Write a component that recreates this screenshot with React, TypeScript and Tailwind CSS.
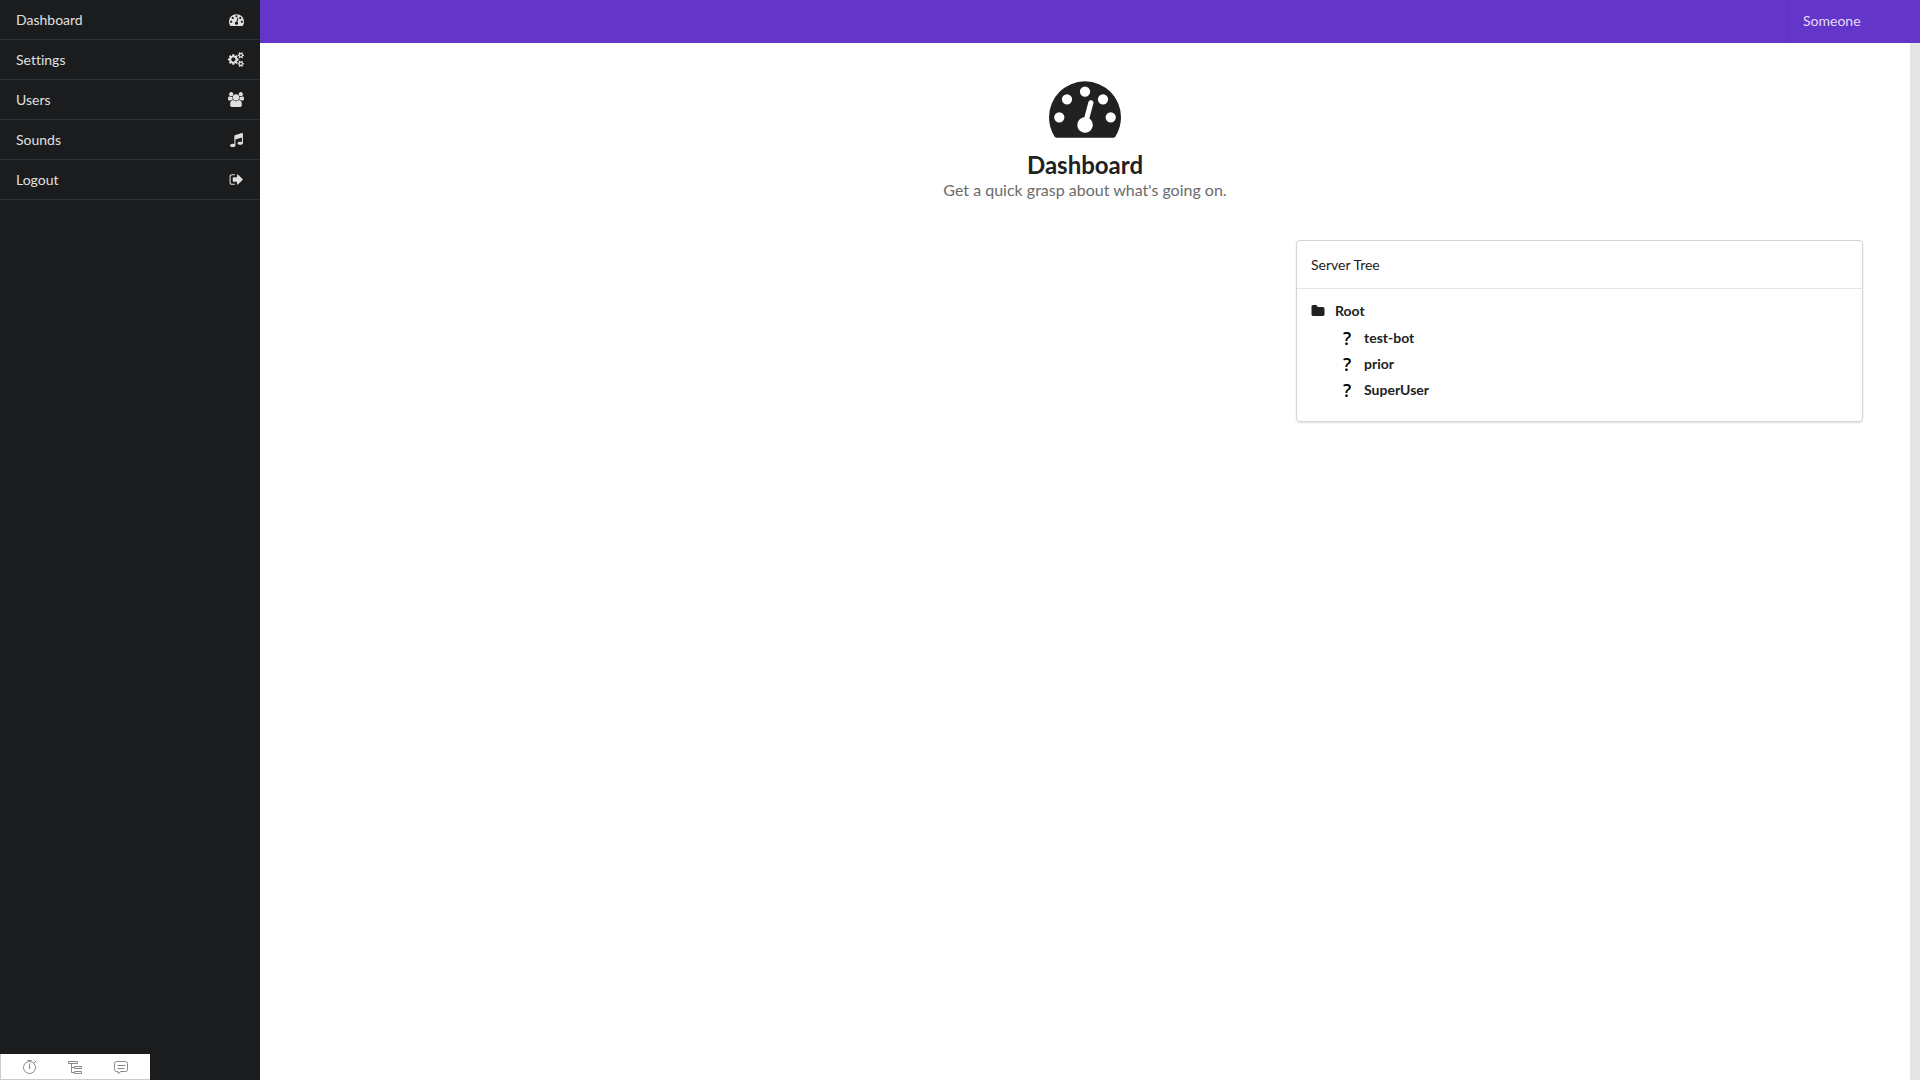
import React from "react";

type IconProps = { className?: string };

const smallGear =
  "v140q0 16-149 31-12 27-30 52 51 113 51 138 0 4-4 7-122 71-124 71-8 0-46-47t-52-68q-20 2-30 2t-30-2q-14 21-52 68t-46 47q-2 0-124-71-4-3-4-7 0-25 51-138-18-25-30-52-149-15-149-31v-140q0-16 149-31 13-29 30-52-51-113-51-138 0-4 4-7 4-2 35-20t59-34 30-16q8 0 46 46.5t52 67.5q20-2 30-2t30 2q51-71 92-112l6-2q4 0 124 70 4 3 4 7 0 25-51 138 17 23 30 52 149 15 149 31z";

function GaugeIcon({ className }: IconProps) {
  return (
    <svg viewBox="0 0 1792 1792" className={className} fill="currentColor" aria-hidden="true">
      <path d="M384 1152q0-53-37.5-90.5t-90.5-37.5-90.5 37.5-37.5 90.5 37.5 90.5 90.5 37.5 90.5-37.5 37.5-90.5zm192-448q0-53-37.5-90.5t-90.5-37.5-90.5 37.5-37.5 90.5 37.5 90.5 90.5 37.5 90.5-37.5 37.5-90.5zm428 481l101-382q6-26-7.5-48.5t-38.5-29.5-48 6.5-30 39.5l-101 382q-60 5-107 43.5t-63 98.5q-20 77 20 146t117 89 146-20 89-117q16-60-6-117t-72-91zm660-33q0-53-37.5-90.5t-90.5-37.5-90.5 37.5-37.5 90.5 37.5 90.5 90.5 37.5 90.5-37.5 37.5-90.5zm-640-640q0-53-37.5-90.5t-90.5-37.5-90.5 37.5-37.5 90.5 37.5 90.5 90.5 37.5 90.5-37.5 37.5-90.5zm448 192q0-53-37.5-90.5t-90.5-37.5-90.5 37.5-37.5 90.5 37.5 90.5 90.5 37.5 90.5-37.5 37.5-90.5zm320 448q0 261-141 483-19 29-54 29h-1402q-35 0-54-29-141-221-141-483 0-182 71-348t191-286 286-191 348-71 348 71 286 191 191 286 71 348z" />
    </svg>
  );
}

function GearsIcon({ className }: IconProps) {
  return (
    <svg viewBox="0 0 1920 1792" className={className} fill="currentColor" aria-hidden="true">
      <path
        fillRule="evenodd"
        d="M896 896q0-106-75-181t-181-75-181 75-75 181 75 181 181 75 181-75 75-181zM1280 805v185q0 10-7 19.5t-16 10.5l-155 24q-11 35-32 76 34 48 90 115 7 11 7 20 0 12-7 19-23 30-82.5 89.5t-78.5 59.5q-11 0-21-7l-115-90q-37 19-77 31-11 108-23 155-7 24-30 24h-186q-11 0-20-7.5t-10-17.5l-23-153q-34-10-75-31l-118 89q-7 7-20 7-11 0-21-8-144-133-144-160 0-9 7-19 10-14 41-53t47-61q-23-44-35-82l-152-24q-10-1-17-9.5t-7-19.5v-185q0-10 7-19.5t16-10.5l155-24q11-35 32-76-34-48-90-115-7-11-7-20 0-12 7-20 22-30 82-89t79-59q11 0 21 7l115 90q34-18 77-32 11-108 23-154 7-24 30-24h186q11 0 20 7.5t10 17.5l23 153q34 10 75 31l118-89q8-7 20-7 11 0 21 8 144 133 144 160 0 8-7 19-12 16-42 54t-45 60q23 48 34 82l152 23q10 2 17 10.5t7 19.5z"
      />
      <path fillRule="evenodd" d={"M1920 1338" + smallGear + "M1664 1408q0-52-38-90t-90-38-90 38-38 90q0 53 37.5 90.5t90.5 37.5 90.5-37.5 37.5-90.5z"} />
      <path fillRule="evenodd" d={"M1920 314" + smallGear + "M1664 384q0-52-38-90t-90-38-90 38-38 90q0 53 37.5 90.5t90.5 37.5 90.5-37.5 37.5-90.5z"} />
    </svg>
  );
}

function UsersIcon({ className }: IconProps) {
  return (
    <svg viewBox="0 0 1920 1792" className={className} fill="currentColor" aria-hidden="true">
      <path d="M593 896q-162 5-265 128h-134q-82 0-138-40.5t-56-118.5q0-353 124-353 6 0 43.5 21t97.5 42.5 119 21.5q67 0 133-23-5 37-5 66 0 139 81 256zm1071 637q0 120-73 189.5t-194 69.5h-874q-121 0-194-69.5t-73-189.5q0-53 3.5-103.5t14-109 26.5-108.5 43-97.5 62-81 85.5-53.5 111.5-20q10 0 43 21.5t73 48 107 48 135 21.5 135-21.5 107-48 73-48 43-21.5q61 0 111.5 20t85.5 53.5 62 81 43 97.5 26.5 108.5 14 109 3.5 103.5zm-1024-1277q0 106-75 181t-181 75-181-75-75-181 75-181 181-75 181 75 75 181zm704 384q0 159-112.5 271.5t-271.5 112.5-271.5-112.5-112.5-271.5 112.5-271.5 271.5-112.5 271.5 112.5 112.5 271.5zm576 225q0 78-56 118.5t-138 40.5h-134q-103-123-265-128 81-117 81-256 0-29-5-66 66 23 133 23 59 0 119-21.5t97.5-42.5 43.5-21q124 0 124 353zm-128-609q0 106-75 181t-181 75-181-75-75-181 75-181 181-75 181 75 75 181z" />
    </svg>
  );
}

function MusicIcon({ className }: IconProps) {
  return (
    <svg viewBox="0 0 1792 1792" className={className} fill="currentColor" aria-hidden="true">
      <path d="M1664 224v1120q0 50-34 89t-86 60.5-103.5 32-96.5 10.5-96.5-10.5-103.5-32-86-60.5-34-89 34-89 86-60.5 103.5-32 96.5-10.5q105 0 192 39v-537l-768 237v709q0 50-34 89t-86 60.5-103.5 32-96.5 10.5-96.5-10.5-103.5-32-86-60.5-34-89 34-89 86-60.5 103.5-32 96.5-10.5q105 0 192 39v-967q0-31 19-56.5t49-35.5l832-256q12-4 28-4 40 0 68 28t28 68z" />
    </svg>
  );
}

function SignOutIcon({ className }: IconProps) {
  return (
    <svg viewBox="0 0 1792 1792" className={className} fill="currentColor" aria-hidden="true">
      <path d="M704 1440q0 4 1 20t.5 26.5-3 23.5-10 19.5-20.5 6.5h-320q-119 0-203.5-84.5t-84.5-203.5v-704q0-119 84.5-203.5t203.5-84.5h320q13 0 22.5 9.5t9.5 22.5q0 4 1 20t.5 26.5-3 23.5-10 19.5-20.5 6.5h-320q-66 0-113 47t-47 113v704q0 66 47 113t113 47h312l11.5 1 11.5 3 8 5.5 7 9 2 13.5zm928-544q0 26-19 45l-544 544q-19 19-45 19t-45-19-19-45v-288h-448q-26 0-45-19t-19-45v-384q0-26 19-45t45-19h448v-288q0-26 19-45t45-19 45 19l544 544q19 19 19 45z" />
    </svg>
  );
}

function FolderIcon({ className }: IconProps) {
  return (
    <svg viewBox="0 0 1792 1792" className={className} fill="currentColor" aria-hidden="true">
      <path d="M1728 608v704q0 92-66 158t-158 66h-1216q-92 0-158-66t-66-158v-960q0-92 66-158t158-66h320q92 0 158 66t66 158v32h672q92 0 158 66t66 158z" />
    </svg>
  );
}

function StopwatchIcon() {
  return (
    <svg viewBox="0 0 16 16" className="size-4" fill="none" stroke="currentColor" aria-hidden="true">
      <circle cx="7.5" cy="8.500" r="6" />
      <path d="M7.500 4.500v5M5.500 1.500h4M12 4l1.500-1.500M12.500 1.500l1.500 1.500" />
      <circle cx="7.5" cy="9" r="0.500" />
    </svg>
  );
}

function TreeIcon() {
  return (
    <svg viewBox="0 0 16 16" className="size-4" fill="none" stroke="currentColor" aria-hidden="true">
      <path d="M1.500 2.500h9v2h-9zM7.500 7.500h7v2h-7zM7.500 12.500h7v2h-7zM4.500 4.500v9h3M4.500 8.500h3" />
    </svg>
  );
}

function CommentIcon() {
  return (
    <svg viewBox="0 0 16 16" className="size-4" fill="none" stroke="currentColor" aria-hidden="true">
      <path d="M3.500 2.500h9q2 0 2 2v6q0 2-2 2h-4.500l-3 2v-2h-1.500q-2 0-2-2v-6q0-2 2-2zM4.500 6.500h8M4.500 9.500h7" />
    </svg>
  );
}

const menu = [
  { label: "Dashboard", Icon: GaugeIcon, size: "size-[15px]" },
  { label: "Settings", Icon: GearsIcon, size: "h-[15px] w-4" },
  { label: "Users", Icon: UsersIcon, size: "h-[15px] w-4" },
  { label: "Sounds", Icon: MusicIcon, size: "size-[15px]" },
  { label: "Logout", Icon: SignOutIcon, size: "size-[15px]" },
];

const users = ["test-bot", "prior", "SuperUser"];

const tools = [
  { label: "Timing", Icon: StopwatchIcon },
  { label: "Tree", Icon: TreeIcon },
  { label: "Messages", Icon: CommentIcon },
];

export default function App() {
  return (
    <div className="flex h-screen bg-white font-['Lato',sans-serif] text-sm text-[#212121] [font-variant-ligatures:none]">
      <aside className="flex w-[260px] shrink-0 flex-col justify-between bg-[#1b1c1d]">
        <nav>
          {menu.map(({ label, Icon, size }) => (
            <a
              key={label}
              href="#"
              className="flex h-10 items-center justify-between border-b border-[#303132] px-4 leading-none text-[#e0e0e0]"
            >
              {label}
              <span className="flex w-4 justify-center">
                <Icon className={size} />
              </span>
            </a>
          ))}
        </nav>
        <div className="flex h-[26px] w-[150px] items-center justify-around border-b border-l border-[#ccc] bg-white px-1.5 text-[#8a8a8a]">
          {tools.map(({ label, Icon }) => (
            <button key={label} aria-label={label}>
              <Icon />
            </button>
          ))}
        </div>
      </aside>
      <div className="flex min-w-0 flex-1 flex-col">
        <header className="flex h-[43px] shrink-0 justify-end bg-[#6435c9]">
          <a
            href="#"
            className="flex w-[133px] items-center border-l border-[#5b30b7] px-[15px] pb-0.5 leading-none text-[#e5dcf6]"
          >
            Someone
          </a>
        </header>
        <div className="flex min-h-0 flex-1">
          <main className="min-w-0 flex-1 px-[47px]">
            <div className="flex flex-col items-center pt-7">
              <GaugeIcon className="size-[72px]" />
              <h1 className="mt-1.5 text-2xl leading-[31px] font-bold">Dashboard</h1>
              <p className="text-base leading-5 text-[#6b6b6b]">Get a quick grasp about what's going on.</p>
            </div>
            <section className="mt-10 ml-auto w-[567px] max-w-full rounded border border-[#d4d4d5] shadow-[0_1px_2px_rgba(34,36,38,0.15)]">
              <h2 className="border-b border-[#e5e5e5] px-3.5 pt-3.5 pb-[13px] leading-5">Server Tree</h2>
              <div className="px-3.5 pt-3 pb-[18px] font-bold">
                <div className="flex items-center gap-2.5 leading-5">
                  <FolderIcon className="size-3.5" />
                  Root
                </div>
                <ul className="mt-1 pl-8">
                  {users.map((user) => (
                    <li key={user} className="flex h-[26px] items-center">
                      <span className="w-[21px] font-['Open_Sans',sans-serif] text-lg font-semibold text-black">?</span>
                      {user}
                    </li>
                  ))}
                </ul>
              </div>
            </section>
          </main>
          <div className="w-2.5 shrink-0 bg-[#e5e5e5]" />
        </div>
      </div>
    </div>
  );
}
